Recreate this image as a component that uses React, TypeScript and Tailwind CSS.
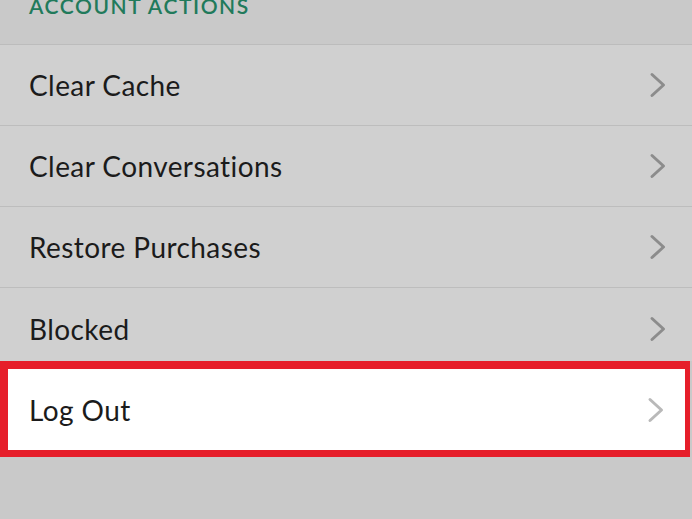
import { ReactNode } from 'react';

const items = ['Clear Cache', 'Clear Conversations', 'Restore Purchases'];

function Chevron({ light, inset }: { light?: boolean; inset?: boolean }) {
  return (
    <svg width="18" height="26" viewBox="0 0 18 26" fill="none" className={'shrink-0 ' + (inset ? 'mr-[20px]' : 'mr-[25px]')}>
      <path d="M3 2.5 L14.5 13 L3 23.5" stroke={light ? '#b9b9b9' : '#8c8c8c'} strokeWidth="3" strokeLinecap="round" strokeLinejoin="round" />
    </svg>
  );
}

function Row({ children, className, light, inset }: { children: ReactNode; className?: string; light?: boolean; inset?: boolean }) {
  return (
    <div className={'flex items-center justify-between ' + (inset ? 'pl-[21px] ' : 'pl-[29px] ') + (className ?? '')}>
      <span className="text-[28px] leading-none tracking-[0.015em] text-[#1b1b1b]">{children}</span>
      <Chevron light={light} inset={inset} />
    </div>
  );
}

export default function App() {
  return (
    <div className="h-[519px] w-[692px] overflow-hidden bg-[#c9c9c9] font-['Lato','Noto_Sans',sans-serif]">
      <div className="flex h-[44px] items-start pl-[29px]">
        <span className="-mt-[5px] text-[21px] font-semibold uppercase leading-none tracking-[0.075em] text-[#217a5b]">Account Actions</span>
      </div>
      <div className="border-t border-[#bcbcbc] bg-[#d0d0d0]">
        {items.map((t) => (
          <Row key={t} className="h-[81px] border-b border-[#bdbdbd]">{t}</Row>
        ))}
        <Row className="h-[73px] pt-[8px]">Blocked</Row>
      </div>
      <div className="w-[690px] border-b-[7px] border-l-[8px] border-r-[5px] border-t-[8px] border-[#e61e2a] bg-white">
        <Row className="h-[81px]" light inset>Log Out</Row>
      </div>
    </div>
  );
}
